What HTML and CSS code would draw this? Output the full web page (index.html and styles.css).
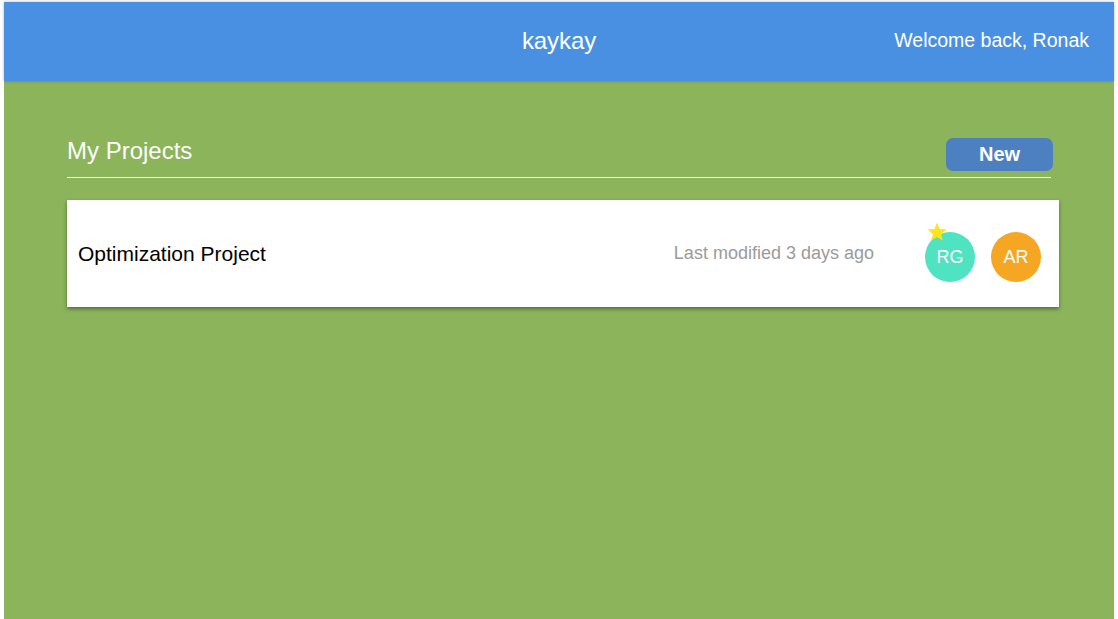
FILE: index.html
```html
<!DOCTYPE html>
<html lang="en">
<head>
<meta charset="utf-8">
<title>kaykay</title>
<link rel="stylesheet" href="styles.css">
</head>
<body>
<div class="app">
  <header class="topbar">
    <div class="topbar-side"></div>
    <div class="brand">kaykay</div>
    <div class="topbar-side welcome">Welcome back, Ronak</div>
  </header>
  <main class="main">
    <div class="section-head">
      <h1 class="section-title">My Projects</h1>
      <button class="btn-new">New</button>
    </div>
    <div class="project-card">
      <div class="project-name">Optimization Project</div>
      <div class="project-meta">Last modified 3 days ago</div>
      <div class="members">
        <div class="avatar avatar-teal">
          <svg class="star" viewBox="0 0 20 20" width="20" height="20" aria-hidden="true"><polygon points="10,0.5 12.6,7.0 19.51,7.41 14.1,11.9 15.88,18.59 10,14.9 4.12,18.59 5.9,11.9 0.49,7.41 7.4,7.0" fill="#F8E71C"/></svg>
          RG
        </div>
        <div class="avatar avatar-orange">AR</div>
      </div>
    </div>
  </main>
</div>
</body>
</html>
```

FILE: styles.css
```css
* { box-sizing: border-box; }

html, body {
  margin: 0;
  padding: 0;
  background: #ffffff;
  font-family: "Liberation Sans", Arial, Helvetica, sans-serif;
}

.app {
  margin: 2px 4px 0 4px;
  height: calc(100vh - 2px);
  display: flex;
  flex-direction: column;
}

.topbar {
  position: relative;
  z-index: 2;
  height: 79px;
  flex: 0 0 auto;
  background: #4A90E2;
  color: #ffffff;
  display: grid;
  grid-template-columns: 1fr auto 1fr;
  align-items: center;
  padding: 0 25px 2px 25px;
  box-shadow: 0 0 3px rgba(0, 0, 0, 0.28);
}

.brand {
  font-size: 24px;
  letter-spacing: -0.1px;
}

.welcome {
  font-size: 19.5px;
  text-align: right;
}

.main {
  flex: 1 1 auto;
  background: #8BB45B;
  padding: 57px 63px 0 63px;
}

.section-head {
  display: flex;
  justify-content: space-between;
  align-items: flex-start;
  padding-bottom: 6px;
  border-bottom: 1px solid #ffffff;
}

.section-title {
  margin: 0;
  font-size: 24px;
  font-weight: normal;
  line-height: 26px;
  color: #ffffff;
}

.btn-new {
  width: 107px;
  height: 33px;
  margin-right: -2px;
  border: none;
  border-radius: 7px;
  background: #4C80C1;
  color: #ffffff;
  font-family: "Liberation Sans", Arial, sans-serif;
  font-size: 20px;
  font-weight: bold;
  padding: 0;
  cursor: pointer;
}

.project-card {
  margin-top: 22px;
  margin-right: -8px;
  height: 107px;
  background: #ffffff;
  display: flex;
  align-items: center;
  padding: 0 18px 0 11px;
  box-shadow: 0 2px 4px rgba(0, 0, 0, 0.4);
}

.project-name {
  flex: 1 1 auto;
  font-size: 21px;
  color: #000000;
}

.project-meta {
  font-size: 18px;
  color: #9B9B9B;
  margin-right: 51px;
}

.members {
  display: flex;
  gap: 16px;
  margin-top: 7px;
}

.avatar {
  position: relative;
  width: 50px;
  height: 50px;
  border-radius: 50%;
  display: flex;
  align-items: center;
  justify-content: center;
  color: #ffffff;
  font-size: 18px;
}

.avatar-teal { background: #50E3C2; }
.avatar-orange { background: #F5A623; }

.star {
  position: absolute;
  left: 2px;
  top: -10px;
}
```
